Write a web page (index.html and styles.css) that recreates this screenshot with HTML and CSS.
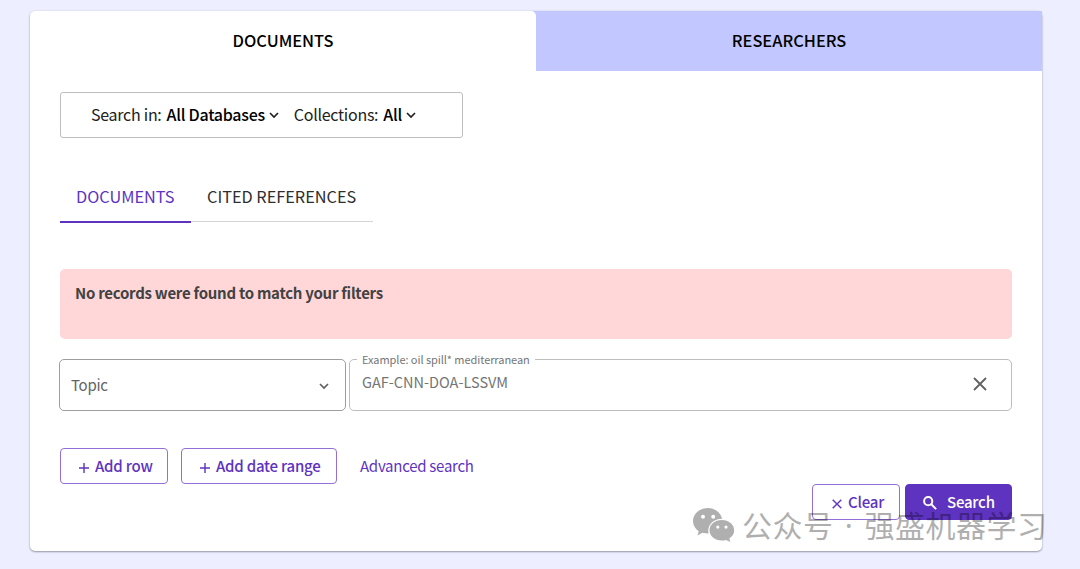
FILE: index.html
```html
<!DOCTYPE html>
<html lang="en">
<head>
    <meta charset="UTF-8">
    <meta name="viewport" content="width=device-width, initial-scale=1.0">
    <title>Document Search</title>
    <link rel="stylesheet" href="styles.css">
</head>
<body>
<main class="card">
    <nav class="main-tabs">
        <a class="main-tab active">DOCUMENTS</a>
        <a class="main-tab">RESEARCHERS</a>
    </nav>

    <div class="content">
        <div class="database-bar">
            <span class="db-label">Search in:</span>
            <strong class="db-value">All Databases</strong>
            <svg class="chevron" viewBox="0 0 10 7"><path d="M1 1l4 4 4-4"/></svg>
            <span class="db-label collections">Collections:</span>
            <strong class="db-value">All</strong>
            <svg class="chevron" viewBox="0 0 10 7"><path d="M1 1l4 4 4-4"/></svg>
        </div>

        <nav class="sub-tabs">
            <a class="sub-tab active">DOCUMENTS</a>
            <a class="sub-tab">CITED REFERENCES</a>
        </nav>

        <div class="error-message"><span>No records were found to match your filters</span></div>

        <form class="search-form">
            <div class="search-row">
                <div class="field-select">
                    <span>Topic</span>
                    <svg class="chevron" viewBox="0 0 10 7"><path d="M1 1l4 4 4-4"/></svg>
                </div>
                <fieldset class="field-input">
                    <legend><span>Example: oil spill* mediterranean</span></legend>
                    <div class="field-body">
                        <span class="field-value">GAF-CNN-DOA-LSSVM</span>
                        <svg class="clear-icon" viewBox="0 0 14 14"><path d="M1 1l12 12M13 1L1 13"/></svg>
                    </div>
                </fieldset>
            </div>

            <div class="form-actions">
                <button type="button" class="btn btn-row">
                    <svg class="btn-icon" viewBox="0 0 10 10"><path d="M5 0v10M0 5h10"/></svg>
                    <span>Add row</span>
                </button>
                <button type="button" class="btn btn-range">
                    <svg class="btn-icon" viewBox="0 0 10 10"><path d="M5 0v10M0 5h10"/></svg>
                    <span>Add date range</span>
                </button>
                <a class="advanced-link">Advanced search</a>
            </div>

            <div class="form-submit">
                <button type="button" class="btn btn-clear">
                    <svg class="btn-icon" viewBox="0 0 10 10"><path d="M.7.7l8.6 8.6M9.3.7L.7 9.3"/></svg>
                    <span>Clear</span>
                </button>
                <button type="button" class="btn btn-search">
                    <svg class="search-icon" viewBox="0 0 14 14"><circle cx="5.2" cy="5.2" r="4.1"/><path d="M8.3 8.3l4.8 4.8"/></svg>
                    <span>Search</span>
                </button>
            </div>
        </form>
    </div>
</main>

<div class="watermark">
    <svg class="wechat-icon" viewBox="0 0 42 34">
        <path fill-rule="evenodd" d="M15 0C6.700 0 0 5.800 0 13c0 4.200 2.200 7.800 5.700 10.200L4.500 27.500l5-2.700c1.900.5 3.800.8 6.100.8C13.500 17.500 20 10.800 29.200 10.700 27.500 4.300 21.700 0 15 0zM10 6.800a2 2 0 1 1 0 4 2 2 0 0 1 0-4zM20.200 6.800a2 2 0 1 1 0 4 2 2 0 0 1 0-4z"/>
        <path fill-rule="evenodd" d="M28.800 12C21.800 12 16.500 16.600 16.500 22.200S21.800 32.500 28.800 32.500c1.600 0 3-.2 4.300-.6l4.200 2.100-1-3.600c3-1.900 4.900-4.800 4.900-8.200C41.200 16.600 35.700 12 28.800 12zM24.800 17.500a1.600 1.600 0 1 1 0 3.200 1.600 1.600 0 0 1 0-3.200zM33 17.500a1.600 1.600 0 1 1 0 3.200 1.600 1.600 0 0 1 0-3.200z"/>
    </svg>
    <span>公众号</span>
    <span class="dot">·</span>
    <span>强盛机器学习</span>
</div>
</body>
</html>
```

FILE: styles.css
```css
* {
    box-sizing: border-box;
}

body {
    margin: 0;
    padding: 11px 38px 0 30px;
    height: 569px;
    overflow: hidden;
    background-color: #edeeff;
    font-family: "Noto Sans CJK SC", "Noto Sans", sans-serif;
    font-size: 16px;
    line-height: 24px;
    letter-spacing: -0.27px;
    color: #212121;
    position: relative;
}

.card {
    height: 540px;
    background-color: #ffffff;
    border-radius: 5px;
    box-shadow: 0 1px 2px rgba(0, 0, 0, 0.35), 0 0 2px rgba(80, 80, 130, 0.15);
}

.main-tabs {
    display: flex;
    height: 60px;
    background-color: #c2c7ff;
    border-radius: 5px 0 0 0;
}

.main-tab {
    flex: 1;
    display: flex;
    align-items: center;
    justify-content: center;
    padding-bottom: 2px;
    color: #000000;
    font-size: 16.4px;
    font-weight: 500;
    letter-spacing: 0;
}

.main-tab.active {
    background-color: #ffffff;
    border-radius: 5px 5px 0 0;
}

.content {
    padding: 21px 30px 0;
}

.database-bar {
    display: flex;
    align-items: center;
    width: 403px;
    height: 46px;
    padding: 0 0 2px 30px;
    border: 1px solid #bdbdbd;
    border-radius: 3px;
}

.db-value {
    font-weight: 500;
    color: #000000;
    margin: 0 4px 0 5px;
}

.collections {
    margin-left: 15px;
}

.chevron {
    width: 10px;
    height: 7px;
    margin-top: 2px;
    fill: none;
    stroke: #212121;
    stroke-width: 1.7;
}

.sub-tabs {
    display: flex;
    width: 313px;
    height: 50px;
    margin-top: 34px;
    border-bottom: 1px solid #d4d4d4;
    font-size: 16.3px;
    letter-spacing: 0;
}

.sub-tab {
    height: 51px;
    padding: 12px 16px 0;
    color: #2e2e2e;
    white-space: nowrap;
}

.sub-tab.active {
    width: 131px;
    color: #5e33bf;
    border-bottom: 2px solid #5e33bf;
}

.error-message {
    height: 70px;
    margin-top: 47px;
    padding: 12px 15px;
    border-radius: 5px;
    background-color: #ffd7d8;
    color: #424242;
    font-size: 15px;
    font-weight: 700;
}

.search-row {
    display: flex;
    gap: 3px;
    height: 52px;
    margin: 20px 0 0 -1px;
    font-size: 15px;
    color: #646464;
}

.field-select {
    display: flex;
    align-items: center;
    justify-content: space-between;
    width: 287px;
    padding: 0 16px 0 11px;
    border: 1px solid #9e9e9e;
    border-radius: 5px;
}

.field-select .chevron {
    stroke: #616161;
}

.field-input {
    flex: 1;
    min-width: 0;
    height: 60px;
    margin: -8px 0 0;
    padding: 0 24px 0 12px;
    border: 1px solid #bdbdbd;
    border-radius: 5px;
}

.field-input legend {
    height: 16px;
    margin-left: -5px;
    padding: 0 5px;
    font-size: 11px;
    line-height: 17px;
    letter-spacing: -0.06px;
    color: #757575;
}

.field-body {
    display: flex;
    justify-content: space-between;
    padding-top: 3px;
}

.field-value {
    font-size: 14.5px;
    letter-spacing: 0;
    line-height: 23px;
    color: #757575;
}

.clear-icon {
    width: 14px;
    height: 14px;
    margin-top: 7px;
    fill: none;
    stroke: #616161;
    stroke-width: 1.8;
}

.form-actions {
    display: flex;
    margin-top: 37px;
}

.btn {
    display: flex;
    align-items: center;
    height: 36px;
    padding: 0 0 1px 18px;
    border: 1px solid #9270d8;
    border-radius: 4px;
    background-color: #ffffff;
    color: #5e33bf;
    font-family: inherit;
    font-size: 15px;
    font-weight: 500;
    letter-spacing: -0.22px;
    white-space: nowrap;
}

.btn-row {
    width: 108px;
    margin-right: 13px;
}

.btn-range {
    width: 156px;
}

.btn-icon {
    width: 10px;
    height: 10px;
    margin: 4px 6px 0 0;
    fill: none;
    stroke: #5e33bf;
    stroke-width: 1.4;
}

.advanced-link {
    margin: 6px 0 0 23px;
    color: #5e33bf;
    font-size: 15px;
}

.form-submit {
    display: flex;
    justify-content: flex-end;
    gap: 5px;
}

.btn-clear {
    width: 88px;
    padding-left: 19px;
}

.btn-search {
    width: 107px;
    background-color: #5e33bf;
    border-color: #5e33bf;
    color: #ffffff;
}

.search-icon {
    width: 14px;
    height: 14px;
    margin: 3px 10px 0 -1px;
    fill: none;
    stroke: #ffffff;
    stroke-width: 2;
}

/* account mark laid over the page corner */
.watermark {
    position: absolute;
    left: 693px;
    top: 506px;
    display: flex;
    align-items: center;
    height: 36px;
    color: #000000;
    font-size: 30px;
    line-height: 36px;
    letter-spacing: 0.5px;
    white-space: nowrap;
    opacity: 0.31;
}

.wechat-icon {
    width: 42px;
    height: 34px;
    margin: 2px 7px 0 0;
}

.watermark .dot {
    width: 31px;
    padding-top: 4px;
    font-family: "Noto Sans", sans-serif;
    text-align: center;
}
```
